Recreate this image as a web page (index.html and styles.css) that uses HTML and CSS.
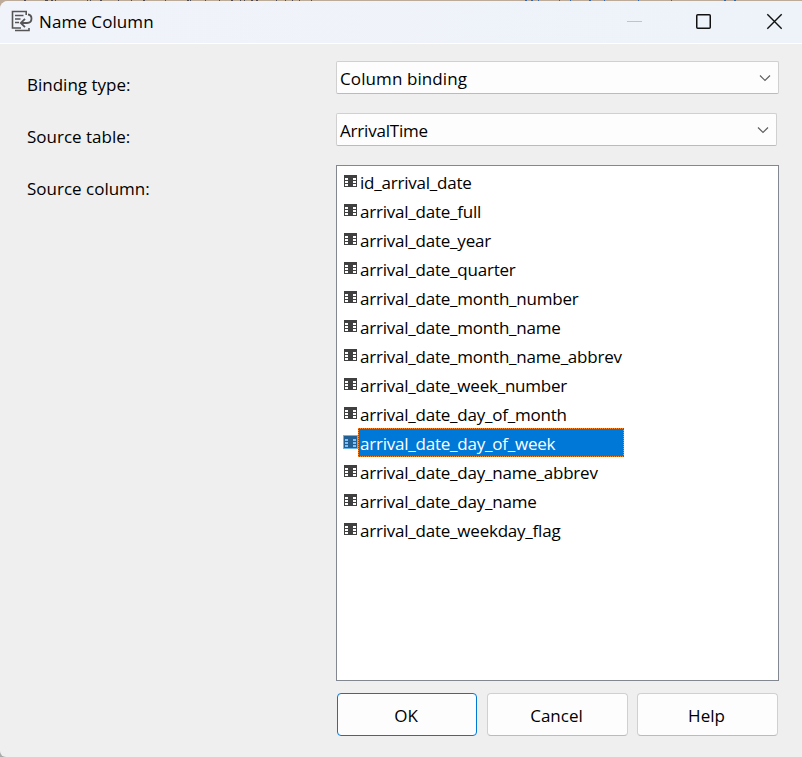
FILE: index.html
```html
<!DOCTYPE html>
<html lang="en">
<head>
<meta charset="utf-8">
<title>Name Column</title>
<link rel="stylesheet" href="styles.css">
</head>
<body>
<svg class="defs" aria-hidden="true">
  <symbol id="column" viewBox="0 0 15 14">
    <rect class="tint" width="15" height="14"/>
    <rect class="ink" x="1" y="1" width="13" height="12"/>
    <path class="cell" d="M2 4h3v2H2zM2 7h3v2H2zM2 10h3v2H2zM10 4h3v2h-3zM10 7h3v2h-3zM10 10h3v2h-3z"/>
  </symbol>
</svg>
<div class="backdrop">
<svg class="fragments" width="802" height="1" viewBox="0 0 802 1" stroke-width="2">
  <path stroke="#4b4a50" d="M24 .5h2M45 .5h3M51 .5h2M55 .5h1M87 .5h1M90 .5h1M100 .5h2M118 .5h1M131 .5h1M143 .5h2M165 .5h1M187 .5h2M190 .5h1M205 .5h1M219 .5h1M231 .5h2M240 .5h1M244 .5h1M251 .5h2M256 .5h2M276 .5h1M285 .5h1M292 .5h1M299 .5h1M311 .5h1"/>
  <path stroke="#3465a4" d="M525 .5h2M531 .5h2M538 .5h1M559 .5h1M570 .5h1M589 .5h2M604 .5h1M638 .5h1M671 .5h1M724 .5h2M734 .5h2"/>
</svg>
<main class="dialog">
  <header class="titlebar">
    <svg class="app-icon" width="22" height="22" viewBox="0 0 22 22" fill="none" stroke="#555" stroke-width="1.600">
      <path d="M15.200 5V1.500H1.500v16.500H10M4 5.500h8.500M4 9h5.500M4 12.500h4M4 20.500h14v-2.500"/>
      <path d="M17 4.500c2.500.4 3.500 2 3.500 4 0 3-1.700 4.500-4.500 4.500H10M14 8.800 9.800 13l4.200 4.200" stroke-width="1.800"/>
    </svg>
    <h1>Name Column</h1>
    <svg class="controls" width="160" height="40" viewBox="0 0 160 40" fill="none">
      <path d="M0 20.500h15" stroke="#bfc4c9"/>
      <rect x="69.750" y="13.750" width="13.500" height="13.500" rx="1" stroke="#111" stroke-width="1.500"/>
      <path d="m140.300 13.300 14.400 14.400m0-14.400-14.400 14.400" stroke="#111" stroke-width="1.400"/>
    </svg>
  </header>
  <form class="form">
    <label>Binding type:</label>
    <div class="select wide-text"><span>Column binding</span><svg width="12" height="8" viewBox="0 0 12 8"><path d="m1 1.500 5 5 5-5"/></svg></div>
    <label>Source table:</label>
    <div class="select narrow"><span>ArrivalTime</span><svg width="12" height="8" viewBox="0 0 12 8"><path d="m1 1.500 5 5 5-5"/></svg></div>
    <label>Source column:</label>
    <ul class="list">
      <li><svg><use href="#column"/></svg><span>id_arrival_date</span></li>
      <li><svg><use href="#column"/></svg><span>arrival_date_full</span></li>
      <li><svg><use href="#column"/></svg><span>arrival_date_year</span></li>
      <li><svg><use href="#column"/></svg><span>arrival_date_quarter</span></li>
      <li><svg><use href="#column"/></svg><span>arrival_date_month_number</span></li>
      <li><svg><use href="#column"/></svg><span>arrival_date_month_name</span></li>
      <li><svg><use href="#column"/></svg><span>arrival_date_month_name_abbrev</span></li>
      <li><svg><use href="#column"/></svg><span>arrival_date_week_number</span></li>
      <li><svg><use href="#column"/></svg><span>arrival_date_day_of_month</span></li>
      <li class="selected"><svg><use href="#column"/></svg><span>arrival_date_day_of_week</span></li>
      <li><svg><use href="#column"/></svg><span>arrival_date_day_name_abbrev</span></li>
      <li><svg><use href="#column"/></svg><span>arrival_date_day_name</span></li>
      <li><svg><use href="#column"/></svg><span>arrival_date_weekday_flag</span></li>
    </ul>
  </form>
  <footer class="buttons">
    <button class="primary">OK</button>
    <button>Cancel</button>
    <button>Help</button>
  </footer>
</main>
</div>
</body>
</html>
```
FILE: styles.css
```css
* { box-sizing: border-box; }
body { margin: 0; font: 17px/24px "Open Sans", "Noto Sans", sans-serif; color: #000; }
.defs { display: none; }
.backdrop {
  width: 802px; height: 757px; overflow: hidden;
  background: linear-gradient(#bcab98 50%, #aaa 50%);
}
.fragments { display: block; }
.dialog { height: 756px; background: #efefef; border-radius: 8px 0 0 6px; overflow: hidden; }
.titlebar {
  display: flex; align-items: flex-start; height: 43px;
  background: linear-gradient(90deg, #f0f3fa, #eef3f9);
  border-bottom: 1px solid #fff;
}
.app-icon { margin: 9px 0 0 11px; }
h1 { margin: 9px 0 0 6px; font-size: 17px; font-weight: 400; letter-spacing: 0.08px; }
.controls { margin-left: auto; margin-right: 15px; }
.form {
  display: grid; grid-template-columns: 309px 443px; grid-template-rows: 33px 33px 516px;
  row-gap: 19px; margin: 17px 0 0 27px;
}
label { padding-top: 12px; letter-spacing: 0; }
.select {
  display: flex; align-items: center; justify-content: space-between;
  height: 33px; padding: 0 7px 0 3px; background: #fdfdfd;
  border: 1px solid #d0d0d0; border-bottom-color: #bbb; border-radius: 2px;
  letter-spacing: -0.2px;
}
.wide-text { letter-spacing: 0.1px; }
.select span { margin-top: 2px; }
.select svg { fill: none; stroke: #606060; stroke-width: 1.2; }
.narrow { width: 441px; }
.list {
  --tint: transparent; --ink: #404040; --cell: #fff;
  margin: 0; padding: 1px 0 0 6px; list-style: none; background: #fff;
  border: 1px solid #828790; letter-spacing: -0.22px;
}
.list li { display: flex; height: 29px; }
.list svg { width: 15px; height: 14px; margin-top: 7px; }
.list span { height: 29px; padding: 4px 0 0 2px; }
.tint { fill: var(--tint); }
.ink { fill: var(--ink); }
.cell { fill: var(--cell); }
.list .selected { --tint: #6fb3e8; --ink: #245f93; --cell: #80c0f4; }
.selected span {
  width: 266px; color: #fff;
  background:
    repeating-linear-gradient(90deg, #ff8728 0 1px, #0078d7 1px 2px) top / 100% 1px no-repeat,
    repeating-linear-gradient(90deg, #ff8728 0 1px, #0078d7 1px 2px) bottom / 100% 1px no-repeat,
    repeating-linear-gradient(#ff8728 0 1px, #0078d7 1px 2px) left / 1px 100% no-repeat,
    repeating-linear-gradient(#ff8728 0 1px, #0078d7 1px 2px) right / 1px 100% no-repeat,
    #0078d7;
}
.buttons { display: flex; gap: 10px; margin: 12px 0 0 337px; }
button {
  width: 141px; height: 43px; padding: 3px 2px 0 0; font: inherit; color: #000;
  background: #fdfdfd; border: 1px solid #d0d0d0; border-bottom-color: #bbb; border-radius: 4px;
}
button:last-child { margin-left: -1px; }
.primary { width: 140px; border-color: #0078d4; }
```
